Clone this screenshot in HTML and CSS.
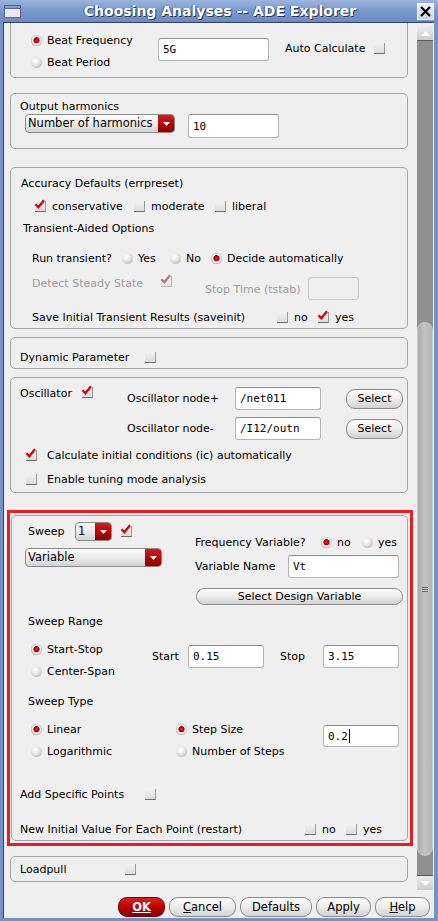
FILE: index.html
```html
<!DOCTYPE html>
<html>
<head>
<meta charset="utf-8">
<link rel="stylesheet" href="styles.css">
</head>
<body>
<div class="window">
  <div class="titlebar">
    <span class="win-icon"><span class="win-icon-bar"></span></span>
    <div class="title">Choosing Analyses -- ADE Explorer</div>
    <span class="close"><svg width="17" height="17" viewBox="0 0 17 17"><path d="M4 4L13 13M13 4L4 13" stroke="#000" stroke-width="2.2"/></svg></span>
  </div>
  <div class="client">
    <div class="main">
      <div class="content">

        <div class="group g1">
          <div class="g1-radios">
            <div class="opt row22"><span class="radio on"></span><span>Beat Frequency</span></div>
            <div class="opt row22"><span class="radio"></span><span>Beat Period</span></div>
          </div>
          <div class="field f-5g">5G</div>
          <div class="auto-lbl">Auto Calculate</div>
          <span class="check auto-chk"></span>
        </div>

        <div class="group g2">
          <div class="lbl">Output harmonics</div>
          <div class="g2-row">
            <div class="combo combo-harm"><span class="combo-text">Number of harmonics</span><span class="combo-arrow"><svg width="7" height="4" viewBox="0 0 7 4"><path d="M0 0H7L3.5 4Z" fill="#fff"/></svg></span></div>
            <div class="field f-harm">10</div>
          </div>
        </div>

        <div class="group g3">
          <div class="r-acc">Accuracy Defaults (errpreset)</div>
          <div class="r-chk">
            <div class="opt copt w99"><span class="check"><svg class="tick" width="11" height="11" viewBox="0 0 11 11"><path d="M1.5 5.2L4.4 8.3L10 1.2" stroke="#d8000e" stroke-width="2.3" fill="none"/></svg></span><span>conservative</span></div>
            <div class="opt copt w81"><span class="check"></span><span>moderate</span></div>
            <div class="opt copt"><span class="check"></span><span>liberal</span></div>
          </div>
          <div class="r-tao">Transient-Aided Options</div>
          <div class="r-run">
            <div class="run-lbl">Run transient?</div>
            <div class="opt w48"><span class="radio"></span><span>Yes</span></div>
            <div class="opt w41"><span class="radio"></span><span>No</span></div>
            <div class="opt"><span class="radio on"></span><span>Decide automatically</span></div>
          </div>
          <div class="r-det">
            <div class="dis det-lbl">Detect Steady State</div>
            <span class="check dis-chk"><svg class="tick" width="11" height="11" viewBox="0 0 11 11"><path d="M1.5 5.2L4.4 8.3L10 1.2" stroke="#b57a7a" stroke-width="2.3" fill="none"/></svg></span>
            <div class="dis stop-lbl">Stop Time (tstab)</div>
            <div class="field f-dis"></div>
          </div>
          <div class="r-save">
            <div class="save-lbl">Save Initial Transient Results (saveinit)</div>
            <div class="opt copt w41"><span class="check"></span><span>no</span></div>
            <div class="opt copt"><span class="check"><svg class="tick" width="11" height="11" viewBox="0 0 11 11"><path d="M1.5 5.2L4.4 8.3L10 1.2" stroke="#d8000e" stroke-width="2.3" fill="none"/></svg></span><span>yes</span></div>
          </div>
        </div>

        <div class="group g4">
          <div class="g4-row"><div class="dyn-lbl">Dynamic Parameter</div><span class="check"></span></div>
        </div>

        <div class="group g5">
          <div class="osc-top">
            <div class="osc-left"><div class="osc-lbl">Oscillator</div><span class="check"><svg class="tick" width="11" height="11" viewBox="0 0 11 11"><path d="M1.5 5.2L4.4 8.3L10 1.2" stroke="#d8000e" stroke-width="2.3" fill="none"/></svg></span></div>
            <div class="osc-right">
              <div class="node-row"><div class="node-lbl">Oscillator node+</div><div class="field f-node">/net011</div><div class="btn btn-sel">Select</div></div>
              <div class="node-row"><div class="node-lbl">Oscillator node-</div><div class="field f-node">/I12/outn</div><div class="btn btn-sel">Select</div></div>
            </div>
          </div>
          <div class="ic-row"><span class="check"><svg class="tick" width="11" height="11" viewBox="0 0 11 11"><path d="M1.5 5.2L4.4 8.3L10 1.2" stroke="#d8000e" stroke-width="2.3" fill="none"/></svg></span><span>Calculate initial conditions (ic) automatically</span></div>
          <div class="ic-row tune-row"><span class="check"></span><span>Enable tuning mode analysis</span></div>
        </div>

        <div class="redbox">
          <div class="group gs">
            <div class="sw-top">
              <div class="sw-left">
                <div class="sw-row">
                  <div class="sweep-lbl">Sweep</div>
                  <div class="combo combo-one"><span class="combo-text">1</span><span class="combo-arrow"><svg width="7" height="4" viewBox="0 0 7 4"><path d="M0 0H7L3.5 4Z" fill="#fff"/></svg></span></div>
                  <span class="check sw-chk"><svg class="tick" width="11" height="11" viewBox="0 0 11 11"><path d="M1.5 5.2L4.4 8.3L10 1.2" stroke="#d8000e" stroke-width="2.3" fill="none"/></svg></span>
                </div>
                <div class="combo combo-var"><span class="combo-text">Variable</span><span class="combo-arrow"><svg width="7" height="4" viewBox="0 0 7 4"><path d="M0 0H7L3.5 4Z" fill="#fff"/></svg></span></div>
              </div>
              <div class="sw-right">
                <div class="fv-row">
                  <div class="fv-lbl">Frequency Variable?</div>
                  <div class="opt w41"><span class="radio on"></span><span>no</span></div>
                  <div class="opt"><span class="radio"></span><span>yes</span></div>
                </div>
                <div class="vn-row"><div class="vn-lbl">Variable Name</div><div class="field f-vn">Vt</div></div>
                <div class="btn btn-sdv">Select Design Variable</div>
              </div>
            </div>

            <div class="sec-title">Sweep Range</div>
            <div class="range">
              <div class="range-radios">
                <div class="opt row22"><span class="radio on"></span><span>Start-Stop</span></div>
                <div class="opt row22"><span class="radio"></span><span>Center-Span</span></div>
              </div>
              <div class="range-fields">
                <div class="start-lbl">Start</div>
                <div class="field f-num">0.15</div>
                <div class="stop-lbl2">Stop</div>
                <div class="field f-num">3.15</div>
              </div>
            </div>

            <div class="sec-title type-title">Sweep Type</div>
            <div class="type">
              <div class="type-col1">
                <div class="opt row22"><span class="radio on"></span><span>Linear</span></div>
                <div class="opt row22"><span class="radio"></span><span>Logarithmic</span></div>
              </div>
              <div class="type-col2">
                <div class="opt row22"><span class="radio on"></span><span>Step Size</span></div>
                <div class="opt row22"><span class="radio"></span><span>Number of Steps</span></div>
              </div>
              <div class="field f-step">0.2<span class="caret"></span></div>
            </div>

            <div class="asp-row"><div class="asp-lbl">Add Specific Points</div><span class="check"></span></div>
            <div class="restart-row">
              <div class="restart-lbl">New Initial Value For Each Point (restart)</div>
              <div class="opt copt w41"><span class="check"></span><span>no</span></div>
              <div class="opt copt"><span class="check"></span><span>yes</span></div>
            </div>
          </div>
        </div>

        <div class="group gl">
          <div class="lp-lbl">Loadpull</div><span class="check"></span>
        </div>

      </div>
      <div class="scrollbar">
        <div class="sb-arrow sb-up"><svg width="9" height="5" viewBox="0 0 9 5"><path d="M0 5H9L4.5 0Z" fill="#fff"/></svg></div>
        <div class="sb-track"><div class="sb-thumb"><span class="grip"></span></div></div>
        <div class="sb-arrow sb-down"><svg width="9" height="5" viewBox="0 0 9 5"><path d="M0 0H9L4.5 5Z" fill="#fff"/></svg></div>
      </div>
    </div>
    <div class="buttons">
      <div class="btn btn-ok"><u>OK</u></div>
      <div class="btn btn-cancel"><u>C</u>ancel</div>
      <div class="btn btn-def">Defaults</div>
      <div class="btn btn-apply">Apply</div>
      <div class="btn btn-help"><u>H</u>elp</div>
    </div>
  </div>
</div>
</body>
</html>
```
FILE: styles.css
```css
* { box-sizing: border-box; }
html, body { margin: 0; padding: 0; }
body {
  width: 438px; height: 921px; overflow: hidden;
  background: #7393c8;
  font-family: "DejaVu Sans", sans-serif;
  font-size: 11px; line-height: 13px; color: #000;
}
.window { height: 921px; display: flex; flex-direction: column; }

/* title bar */
.titlebar {
  height: 22px; flex: none; display: flex; align-items: center;
  padding: 0 4px 0 4px;
  background: linear-gradient(#9cb5df, #7999cd 45%, #6b8bc2);
}
.win-icon {
  width: 17px; height: 13px; margin-top: 1px; flex: none;
  border: 1px solid #55698f; background: #e9ebef;
  display: flex; flex-direction: column;
}
.win-icon-bar { height: 3px; background: #7f9ccb; border-bottom: 1px solid #55698f; }
.title {
  flex: 1; text-align: center; color: #fff; font-weight: bold; font-size: 14px;
  text-shadow: 1px 1px 0 #2c3c5c, -1px 0 0 #4a5f88;
  padding-left: 2px;
}
.close {
  width: 17px; height: 17px; flex: none;
  background: linear-gradient(#eef1f6, #c9d0dc);
  border: 1px solid #f5f7fa; display: flex;
}
.close svg { display: block; margin: -1px; }

/* client */
.client {
  flex: 1; min-height: 0; margin: 0 4px 3px 3px;
  border-top: 1px solid #34435c; border-left: 1px solid #34435c;
  background: #efefef; display: flex; flex-direction: column;
}
.main { flex: 1; min-height: 0; display: flex; }
.content { width: 413px; overflow: hidden; }

/* generic controls */
.group { border: 1px solid #a6a6a6; border-radius: 5px; }
.opt { display: flex; align-items: center; gap: 5px; white-space: nowrap; }
.copt { gap: 6px; }
.row22 { height: 22px; }
.w99 { width: 99px; } .w81 { width: 81px; } .w48 { width: 48px; } .w41 { width: 41px; }
.radio {
  width: 11px; height: 11px; border-radius: 50%; flex: none;
  background: radial-gradient(circle at 40% 35%, #ffffff 0, #f0f0f0 30%, #cfcfcf 65%, #9a9a9a 100%);
}
.radio.on {
  background: radial-gradient(circle at 50% 48%, #ff3b3b 0, #d40000 1.6px, #8c0000 2.8px, #ffffff 3.4px, #eeeeee 4.2px, #bdbdbd 5.3px, #999999 6px);
}
.check {
  position: relative; width: 11px; height: 11px; flex: none;
  background: linear-gradient(#f2f2f2, #dcdcdc);
  border-right: 1px solid #9a9a9a; border-bottom: 1px solid #6e6e6e;
}
.tick { position: absolute; left: -1px; top: -2px; overflow: visible; }
.field {
  background: #fff; border: 1px solid #b4b4b4; border-top-color: #8e8e8e;
  border-radius: 3px; height: 23px; padding-left: 4px;
  display: flex; align-items: center;
  font-family: "DejaVu Sans Mono", monospace; font-size: 11px;
}
.combo {
  display: flex; height: 19px; border: 1px solid #8a8a8a; border-radius: 4px;
  background: linear-gradient(#fdfdfd, #e9e9e9 55%, #d2d2d2); overflow: hidden;
}
.combo-text { flex: 1; padding-left: 2px; display: flex; align-items: center; font-size: 11.5px; }
.combo-arrow {
  width: 16px; flex: none; display: flex; align-items: center; justify-content: center;
  background: linear-gradient(#d91c1c, #b00000 60%, #8e0000);
}
.btn {
  display: flex; align-items: center; justify-content: center;
  border: 1px solid #8b8b8b; border-radius: 9px;
  background: linear-gradient(#fefefe, #ececec 50%, #d2d2d2);
  white-space: nowrap;
}

/* group 1 */
.g1 {
  margin-left: 6px; width: 398px; height: 55px;
  border-top: none; border-radius: 0 0 5px 5px;
  display: flex; align-items: center; padding: 2px 0 0 20px;
}
.g1-radios { width: 127px; }
.f-5g { width: 111px; margin-bottom: 3px; }
.auto-lbl { margin-left: 16px; width: 89px; margin-bottom: 5px; }
.auto-chk { margin-bottom: 5px; }

/* group 2 */
.g2 { margin: 15px 0 0 6px; width: 398px; height: 56px; padding: 6px 0 0 9px; }
.g2-row { display: flex; margin: 1px 0 0 5px; }
.combo-harm { width: 150px; }
.f-harm { width: 91px; height: 24px; margin-left: 13px; }

/* group 3 */
.g3 { margin: 18px 0 0 6px; width: 398px; height: 162px; padding-top: 4px; }
.r-acc { height: 23px; padding-left: 10px; display: flex; align-items: center; }
.r-chk { height: 22px; padding-left: 24px; display: flex; align-items: center; }
.r-tao { height: 22px; padding-left: 12px; display: flex; align-items: center; }
.r-run { margin-top: 8px; height: 22px; padding-left: 21px; display: flex; align-items: center; }
.run-lbl { width: 90px; }
.r-det {
  margin-top: 8px; height: 23px; padding-left: 21px;
  display: grid; grid-template-columns: 129px 44px 103px 51px; align-items: start;
}
.dis { color: #9c9c9c; }
.dis-chk { margin-top: -1px; background: linear-gradient(#f4f4f4, #e4e4e4); border-color: #b8b8b8; }
.stop-lbl { margin-top: 6px; }
.f-dis { background: #efefef; border-color: #c9c9c9; }
.r-save { margin-top: 6px; height: 22px; padding-left: 21px; display: flex; align-items: center; }
.save-lbl { width: 245px; }

/* group 4 */
.g4 { margin: 8px 0 0 6px; width: 398px; height: 32px; padding: 12px 0 0 9px; }
.g4-row { height: 14px; display: flex; align-items: center; }
.dyn-lbl { width: 125px; }

/* group 5 */
.g5 { margin: 8px 0 0 6px; width: 398px; height: 116px; padding-top: 9px; }
.osc-top { display: flex; }
.osc-left { width: 116px; padding-left: 9px; display: flex; align-items: flex-start; }
.osc-lbl { width: 62px; }
.osc-right { display: flex; flex-direction: column; gap: 7px; }
.node-row { display: flex; align-items: center; height: 23px; }
.node-lbl { width: 108px; }
.f-node { width: 86px; }
.btn-sel { width: 57px; height: 20px; margin-left: 25px; font-size: 11px; }
.ic-row { margin-top: 8px; height: 14px; padding-left: 15px; display: flex; align-items: center; gap: 10px; }
.tune-row { margin-top: 10px; }

/* sweep red box */
.redbox {
  margin: 17px 0 0 3px; width: 406px; height: 336px;
  border: 3px solid #ec1c24; padding: 2px 0 0 1px;
}
.gs { width: 397px; height: 326px; }
.sw-top { display: flex; margin-top: 6px; }
.sw-left { width: 183px; padding-left: 13px; }
.sw-row { display: flex; align-items: center; height: 19px; }
.sweep-lbl { width: 50px; padding-left: 3px; }
.combo-one { width: 37px; }
.sw-chk { margin-left: 9px; }
.combo-var { width: 137px; margin-top: 7px; }
.sw-right { margin-top: 13px; }
.fv-row { height: 14px; display: flex; align-items: center; }
.fv-lbl { width: 126px; }
.vn-row { margin-top: 6px; height: 23px; display: flex; align-items: center; }
.vn-lbl { width: 93px; }
.f-vn { width: 111px; }
.btn-sdv { margin: 10px 0 0 1px; width: 207px; height: 17px; }
.sec-title { margin-top: 9px; height: 14px; padding-left: 16px; display: flex; align-items: center; }
.type-title { margin-top: 12px; }
.range { margin-top: 10px; padding-left: 19px; display: flex; }
.range-radios { width: 121px; }
.range-fields { display: flex; align-items: center; height: 23px; margin-top: 7px; }
.start-lbl { width: 36px; }
.stop-lbl2 { width: 43px; margin-left: 16px; }
.f-num { width: 76px; }
.type { margin-top: 10px; padding-left: 19px; display: flex; }
.type-col1 { width: 145px; }
.type-col2 { width: 147px; }
.f-step { width: 76px; height: 22px; margin-top: 7px; }
.caret { display: inline-block; width: 1px; height: 14px; background: #000; margin-left: 1px; }
.asp-row { margin-top: 25px; height: 14px; padding-left: 8px; display: flex; align-items: center; }
.asp-lbl { width: 125px; }
.restart-row { margin-top: 21px; height: 14px; padding-left: 8px; display: flex; align-items: center; }
.restart-lbl { width: 285px; }

/* loadpull */
.gl { margin: 10px 0 0 6px; width: 398px; height: 26px; padding-left: 9px; display: flex; align-items: center; }
.lp-lbl { width: 105px; }

/* scrollbar */
.scrollbar { width: 16px; display: flex; flex-direction: column; padding: 3px 0; }
.sb-arrow {
  height: 15px; flex: none; display: flex; align-items: center; justify-content: center;
  background: linear-gradient(#ececec, #cdcdcd);
}
.sb-up { border-bottom: 1px solid #5a5a5a; }
.sb-down { border-top: 1px solid #5a5a5a; }
.sb-track { flex: 1; background: #8f8f8f; padding-top: 281px; }
.sb-thumb {
  height: 534px; border-radius: 8px; border: 1px solid #c9c9c9;
  background: linear-gradient(90deg, #aaaaaa, #c2c2c2 45%, #b4b4b4);
  display: flex; align-items: center; justify-content: center;
}
.grip {
  width: 6px; height: 5px; margin-top: 0;
  background: repeating-linear-gradient(#6f6f6f 0 1px, transparent 1px 2px);
}

/* bottom buttons */
.buttons {
  height: 25px; flex: none; display: flex; justify-content: flex-end;
  gap: 4px; padding: 4px 4px 0 0;
}
.buttons .btn { height: 20px; font-size: 11.5px; }
.btn-ok {
  width: 47px; color: #fff; font-weight: bold; border-color: #6a0000;
  background: linear-gradient(#dc2020, #b80000 55%, #8c0000);
}
.btn-cancel { width: 67px; }
.btn-def { width: 72px; }
.btn-apply { width: 55px; }
.btn-help { width: 55px; }
```
